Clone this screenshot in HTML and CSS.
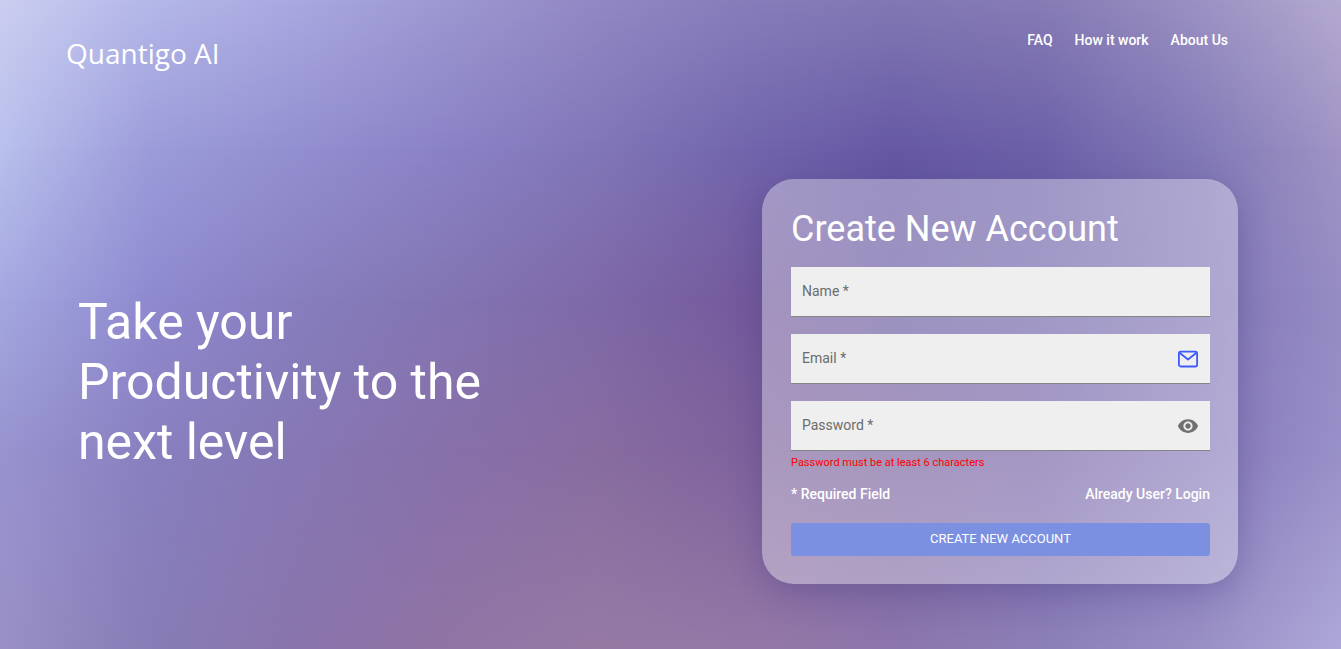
FILE: index.html
```html
<!DOCTYPE html>
<html lang="en">
<head>
<meta charset="utf-8">
<meta name="viewport" content="width=device-width, initial-scale=1">
<title>Quantigo AI</title>
<link rel="stylesheet" href="styles.css">
</head>
<body class="page">
<div class="backdrop" aria-hidden="true">
  <div class="band band-upper"></div>
  <div class="band band-middle"></div>
  <div class="band band-lower"></div>
  <div class="band band-bottom"></div>
</div>
<header class="header">
  <a class="logo" href="#">Quantigo AI</a>
  <nav class="nav">
    <a class="nav-link" href="#">FAQ</a>
    <a class="nav-link" href="#">How it work</a>
    <a class="nav-link" href="#">About Us</a>
  </nav>
</header>
<main class="main">
  <h1 class="headline">Take your Productivity to the next level</h1>
  <form class="card">
    <h2 class="card-title">Create New Account</h2>
    <div class="fields">
      <div class="field">
        <input class="field-input" id="name" type="text" required>
        <label class="field-label" for="name">Name *</label>
      </div>
      <div class="field">
        <input class="field-input" id="email" type="email" required>
        <label class="field-label" for="email">Email *</label>
        <svg class="field-icon" viewBox="0 0 22 22" width="22" height="22" fill="none" stroke="#3d5afe" stroke-width="1.8" stroke-linejoin="round" aria-hidden="true"><rect x="1.900" y="3.700" width="18.200" height="14.800" rx="1.800"/><path d="M2.500 4.700 11 11.500l8.500-6.800"/></svg>
      </div>
      <div class="field">
        <input class="field-input" id="password" type="password" required>
        <label class="field-label" for="password">Password *</label>
        <button class="field-icon eye" type="button" aria-label="Show password"><svg class="eye-icon" viewBox="0 0 24 24" width="22" height="22" fill="#707070"><path d="M12 4.500C7 4.500 2.730 7.610 1 12c1.730 4.390 6 7.500 11 7.500s9.270-3.110 11-7.500c-1.730-4.390-6-7.500-11-7.500zM12 17c-2.760 0-5-2.240-5-5s2.240-5 5-5 5 2.240 5 5-2.240 5-5 5zm0-8c-1.660 0-3 1.340-3 3s1.340 3 3 3 3-1.340 3-3-1.340-3-3-3z"/></svg></button>
      </div>
    </div>
    <p class="error">Password must be at least 6 characters</p>
    <div class="notes">
      <span>* Required Field</span>
      <a class="login" href="#">Already User? Login</a>
    </div>
    <button class="submit" type="submit">CREATE NEW ACCOUNT</button>
  </form>
</main>
</body>
</html>
```
FILE: styles.css
```css
* {
  box-sizing: border-box;
}

.page {
  position: relative;
  margin: 0;
  min-height: 100vh;
  font-family: Roboto, "Liberation Sans", sans-serif;
  color: #fff;
}

/* Each band fades in over the one above it, so the colours blend both ways. */
.backdrop {
  position: absolute;
  inset: 0;
  z-index: -1;
  overflow: hidden;
  background: linear-gradient(90deg, #cccef0, #b4b8e9, #aaa8e0, #9c98d0, #9288c4, #877dbb, #8278b4, #877cb5, #9a90c2, #b4aad0);
}

.band {
  position: absolute;
  inset: 0;
}

.band-upper {
  background: linear-gradient(90deg, #b8c0ec, #9c9cda, #938fd0, #8a82c6, #8176b8, #7265ac, #6658a4, #6c60a8, #8078b6, #a094c4);
  mask-image: linear-gradient(transparent, #000 23%);
}

.band-middle {
  background: linear-gradient(90deg, #a4a8e0, #8f8ad0, #877ebe, #8375b2, #7e69a8, #745a9c, #66579f, #6e62a8, #8074b4, #968cc4);
  mask-image: linear-gradient(transparent 23%, #000 46%);
}

.band-lower {
  background: linear-gradient(90deg, #9894d0, #8880c0, #8678b4, #8770aa, #876ca0, #7e629c, #755e9b, #735fa5, #8577b8, #9890c8);
  mask-image: linear-gradient(transparent 46%, #000 69%);
}

.band-bottom {
  background: linear-gradient(90deg, #9a90c6, #877db6, #8a74ac, #9074a4, #967aa4, #9478a6, #8c76ac, #8c80b8, #988ec4, #aea8d8);
  mask-image: linear-gradient(transparent 69%, #000);
}

.header {
  display: flex;
  justify-content: space-between;
  align-items: flex-start;
  padding: 30px 113px 0 66px;
}

.logo {
  padding-top: 3px;
  font-family: "Open Sans", sans-serif;
  font-size: 28px;
  font-weight: 500;
  line-height: 40px;
  color: #fff;
  text-decoration: none;
}

.nav {
  display: flex;
  gap: 22px;
  font-size: 14px;
  font-weight: 500;
  line-height: 20px;
}

.nav-link,
.login {
  color: #fff;
  text-decoration: none;
}

.main {
  display: flex;
  justify-content: space-between;
  align-items: center;
  gap: 48px;
  padding: 106px 103px 64px 78px;
}

.headline {
  margin: 0;
  max-width: 460px;
  font-size: 50px;
  font-weight: 400;
  line-height: 60px;
}

.card {
  flex: 0 1 476px;
  padding: 28px 28px 28px 29px;
  border-radius: 32px;
  background: rgba(255, 255, 255, 0.35);
  box-shadow: 0 8px 32px rgba(50, 38, 110, 0.28);
}

.card-title {
  margin: 0 0 16px;
  font-size: 36px;
  font-weight: 400;
  line-height: 44px;
}

.fields {
  display: grid;
  gap: 17px;
}

.field {
  display: grid;
  align-items: center;
}

.field > * {
  grid-area: 1 / 1;
}

.field-input {
  width: 100%;
  height: 50px;
  padding: 0 44px 0 11px;
  border: 0;
  border-bottom: 1px solid #858585;
  border-radius: 0;
  background: #efefef;
  font: 14px/20px Roboto, sans-serif;
}

.field-label {
  justify-self: start;
  padding: 0 0 2px 11px;
  font-size: 14px;
  font-weight: 400;
  line-height: 20px;
  color: #6c6c6c;
}

.field-input:focus + .field-label,
.field-input:valid + .field-label {
  visibility: hidden;
}

.field-icon {
  justify-self: end;
  margin-right: 11px;
}

.eye {
  padding: 0;
  border: 0;
  background: none;
  cursor: pointer;
}

.eye-icon {
  display: block;
}

.error {
  margin: 4px 0 0;
  font-size: 11px;
  line-height: 16px;
  color: #f00;
}

.notes {
  display: flex;
  justify-content: space-between;
  margin: 13px 0 19px;
  font-size: 14px;
  font-weight: 500;
  line-height: 20px;
}

.submit {
  width: 100%;
  height: 33px;
  padding: 0 0 2px;
  border: 0;
  border-radius: 3px;
  background: #7b90e0;
  color: #fff;
  font: 400 13px/20px Roboto, sans-serif;
  cursor: pointer;
}
```
